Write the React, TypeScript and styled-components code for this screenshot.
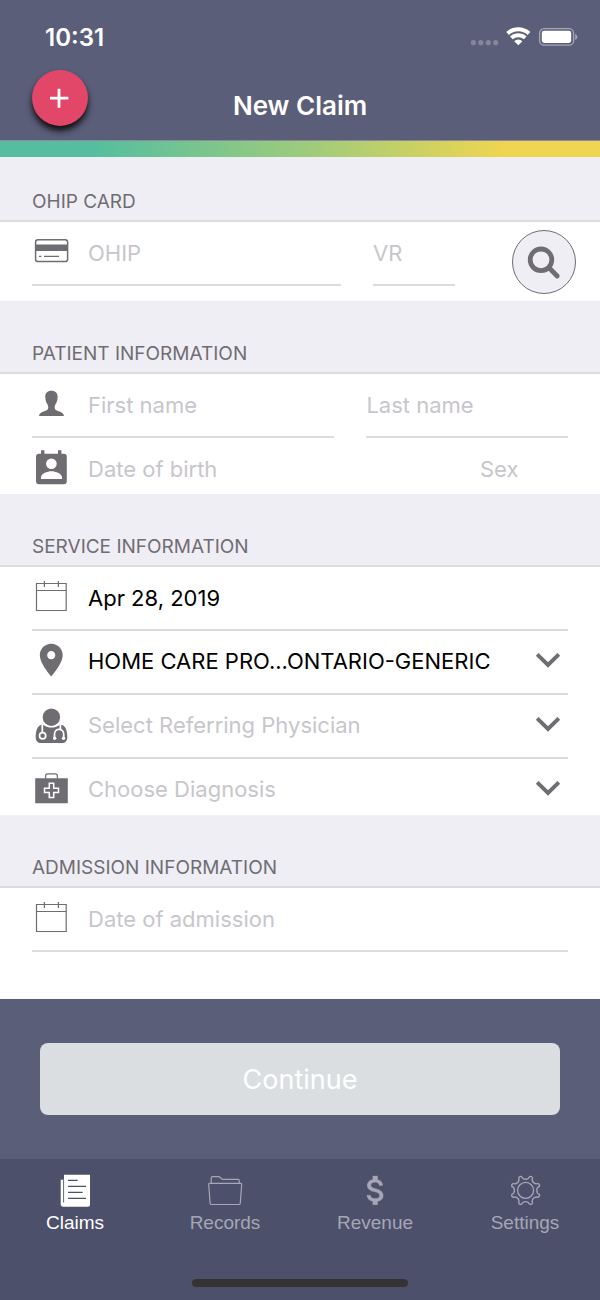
import React from "react";
import styled, { createGlobalStyle } from "styled-components";

const color = {
  chrome: "#5b5e79",
  tabBar: "#4d506b",
  panel: "#f0eef5",
  line: "#dcdce0",
  icon: "#6f6d72",
  hint: "#c7c6cc",
  accent: "#e24668",
  tabIdle: "#a5a6b6",
};

const GlobalStyle = createGlobalStyle`
  *, *::before, *::after { box-sizing: border-box; }
  body {
    margin: 0;
    background: ${color.tabBar};
    font-family: Inter, "Liberation Sans", sans-serif;
  }
  button, input, select { font: inherit; margin: 0; }
`;

const Page = styled.div`
  display: flex;
  flex-direction: column;
  min-height: 100vh;
`;

const Header = styled.header`
  background: ${color.chrome};
  color: #fff;
  border-bottom: 1px solid #8a8a9c;
`;

const StatusBar = styled.div`
  display: flex;
  align-items: center;
  justify-content: space-between;
  height: 70px;
  padding: 4px 22px 0 45px;
`;

const Clock = styled.time`
  font-size: 24px;
  font-weight: 600;
`;

const NavBar = styled.div`
  display: grid;
  grid-template-columns: 1fr auto 1fr;
  align-items: center;
  height: 70px;
  padding: 0 32px;
`;

const Title = styled.h1`
  margin: 0;
  padding-top: 2px;
  font-size: 26px;
  line-height: 32px;
  font-weight: 600;
`;

const AddButton = styled.button`
  display: flex;
  align-items: center;
  justify-content: center;
  align-self: start;
  width: 56px;
  height: 56px;
  padding: 0;
  border: 0;
  border-radius: 50%;
  background: ${color.accent};
  color: #fff;
  box-shadow: 0 5px 6px #111;
`;

const Rainbow = styled.div`
  height: 16px;
  background: linear-gradient(90deg, #56be9f 16%, #9bcb7d 50%, #efd550 84%);
`;

const Form = styled.main`
  flex: 1;
  background: #fff;
`;

const Section = styled.section`
  &:last-child { padding-bottom: 47px; }
`;

const SectionTitle = styled.h2<{ $compact?: boolean }>`
  display: flex;
  align-items: flex-end;
  height: ${(p) => (p.$compact ? 65 : 73)}px;
  margin: 0;
  padding: 0 32px 5px;
  background: ${color.panel};
  border-bottom: 2px solid ${color.line};
  color: ${color.icon};
  font-size: 19px;
  line-height: 26px;
  font-weight: 400;
`;

const CardBody = styled.div`
  display: flex;
  align-items: center;
  gap: 57px;
  padding-right: 24px;
`;

const CardFields = styled.div`
  flex: 1;
  display: grid;
  grid-template-columns: 1fr 82px;
  gap: 32px;
  padding: 0 0 15px 32px;
`;

const Row = styled.div<{ $columns?: string }>`
  display: grid;
  grid-template-columns: ${(p) => p.$columns ?? "1fr"};
  gap: 32px;
  padding: 0 32px;
`;

const Field = styled.label<{ $last?: boolean }>`
  display: flex;
  align-items: center;
  gap: 18px;
  min-width: 0;
  height: ${(p) => (p.$last ? 56 : 64)}px;
  padding-top: ${(p) => (p.$last ? 6 : 0)}px;
  border-bottom: ${(p) => (p.$last ? "0" : `2px solid ${color.line}`)};
`;

const TextInput = styled.input`
  flex: 1;
  width: 100%;
  min-width: 0;
  height: 40px;
  padding: 0;
  border: 0;
  outline: 0;
  background: transparent;
  color: #000;
  font-size: 22px;
  &::placeholder { color: ${color.hint}; opacity: 1; }
`;

const Picker = styled.select<{ $empty?: boolean }>`
  flex: 1;
  min-width: 0;
  height: 40px;
  padding: 0 0 2px;
  border: 0;
  outline: 0;
  appearance: none;
  background: transparent;
  color: ${(p) => (p.$empty ? color.hint : "#000")};
  font-size: 22px;
`;

const FieldIcon = styled.svg`
  flex: none;
  width: 38px;
  height: 40px;
  color: ${color.icon};
`;

const Chevron = styled.svg`
  flex: none;
  width: 26px;
  height: 20px;
  margin: 0 7px 4px 0;
  color: ${color.icon};
`;

const SearchButton = styled.button`
  display: flex;
  align-items: center;
  justify-content: center;
  width: 64px;
  height: 64px;
  padding: 0;
  border: 1px solid ${color.icon};
  border-radius: 50%;
  background: ${color.panel};
  color: ${color.icon};
`;

const Actions = styled.div`
  padding: 44px 40px;
  background: ${color.chrome};
`;

const ContinueButton = styled.button`
  display: block;
  width: 100%;
  height: 72px;
  border: 0;
  border-radius: 8px;
  background: #dadee1;
  color: #fff;
  font-size: 27px;
`;

const TabBar = styled.nav`
  display: flex;
  flex-direction: column;
  justify-content: space-between;
  align-items: center;
  height: 141px;
  padding: 14px 0 13px;
  background: ${color.tabBar};
`;

const Tabs = styled.div`
  display: grid;
  grid-template-columns: repeat(4, 1fr);
  width: 100%;
`;

const Tab = styled.a<{ $active?: boolean }>`
  display: flex;
  flex-direction: column;
  align-items: center;
  color: ${(p) => (p.$active ? "#fff" : color.tabIdle)};
  font-family: "Liberation Sans", Arial, sans-serif;
  font-size: 19px;
  line-height: 28px;
  text-decoration: none;
`;

const TabIcon = styled.svg`
  width: 40px;
  height: 36px;
`;

const HomeIndicator = styled.div`
  width: 36%;
  height: 8px;
  border-radius: 4px;
  background: #363334;
`;

const StatusIcons = () => (
  <svg width="108" height="20" viewBox="0 0 108 20" fill="none" aria-hidden="true">
    <g fill="#fff" fillOpacity=".25">
      <circle cx="3.4" cy="15.7" r="2.6" />
      <circle cx="10.8" cy="15.7" r="2.6" />
      <circle cx="18.3" cy="15.7" r="2.6" />
      <circle cx="25.7" cy="15.7" r="2.6" />
    </g>
    <g stroke="#fff" strokeWidth="4">
      <path d="M37.6 6.4A16 16 0 0 1 59 6.4" />
      <path d="M41.4 10.9A10 10 0 0 1 55.2 10.9" />
    </g>
    <path d="M48.3 18.3L44.2 14.3A5.8 5.8 0 0 1 52.4 14.3Z" fill="#fff" />
    <rect x="69.6" y="1.6" width="34" height="16.6" rx="4.5" stroke="#fff" strokeOpacity=".45" strokeWidth="1.3" />
    <rect x="71.8" y="3.8" width="29.4" height="12.2" rx="2.4" fill="#fff" />
    <path d="M105.2 7c2.8 1 2.8 5 0 6z" fill="#fff" fillOpacity=".45" />
  </svg>
);

const CardIcon = () => (
  <FieldIcon viewBox="0 0 38 40" fill="none" stroke="currentColor" aria-hidden="true">
    <rect x="3.6" y="6.8" width="32" height="21.8" rx="2.4" strokeWidth="1.5" />
    <path d="M3.6 11.6H35.6V18H3.6Z" fill="currentColor" stroke="none" />
    <path d="M7 23.4H9.4M12 23.4H27" strokeWidth="1.4" />
  </FieldIcon>
);

const PersonIcon = () => (
  <FieldIcon viewBox="0 0 38 40" fill="currentColor" aria-hidden="true">
    <path d="M19.4 5.7C15.4 5.7 13.1 8 13.3 12C13.4 15.5 14.2 17.8 15.8 20C16.5 22 16.4 23.8 15.2 24.9C12.5 26.4 7.4 26.6 7 31H32C31.6 26.6 26.4 26.4 23.7 24.9C22.5 23.8 22.4 22 23.1 20C24.7 17.8 25.5 15.5 25.6 12C25.8 8 23.4 5.7 19.4 5.7Z" />
  </FieldIcon>
);

const BirthIcon = () => (
  <FieldIcon viewBox="0 0 38 40" aria-hidden="true">
    <path
      fill="currentColor"
      d="M9 1.2H12.4V4.7H26V1.2H29.4V4.7H31.8A3 3 0 0 1 34.8 7.7V32.2A3 3 0 0 1 31.8 35.2H7A3 3 0 0 1 4 32.2V7.7A3 3 0 0 1 7 4.7H9Z"
    />
    <circle cx="19.4" cy="14.7" r="5.3" fill="#fff" />
    <path d="M9 30V28.3C9 24.6 15.5 22.3 19.4 22.3S30 24.6 30 28.3V30Z" fill="#fff" />
  </FieldIcon>
);

const CalendarIcon = () => (
  <FieldIcon viewBox="0 0 38 40" fill="none" stroke="currentColor" strokeWidth="1.2" aria-hidden="true">
    <path d="M4.5 5.5H34.2V32.5H4.500ZM4.5 12.5H34.2M12.4 3V9M26.4 3V9" />
  </FieldIcon>
);

const PinIcon = () => (
  <FieldIcon viewBox="0 0 38 40" fill="currentColor" aria-hidden="true">
    <path
      transform="translate(-0.3 -1.5) scale(1.63)"
      d="M12 2C8.13 2 5 5.13 5 9c0 5.25 7 13 7 13s7-7.75 7-13c0-3.87-3.13-7-7-7zm0 9.5c-1.38 0-2.5-1.12-2.5-2.5s1.12-2.5 2.5-2.5 2.5 1.12 2.5 2.5-1.12 2.5-2.5 2.5z"
    />
  </FieldIcon>
);

const DoctorIcon = () => (
  <FieldIcon viewBox="0 0 38 40" fill="none" aria-hidden="true">
    <path
      fill="currentColor"
      d="M10.5 18.5C5.5 19.2 3.7 24 3.7 31.5C3.7 35 5.8 37 9 37H30C33.2 37 35.3 35 35.3 31.5C35.3 24 33.5 19.2 28.5 18.5C23 22.6 16 22.6 10.5 18.5Z"
    />
    <circle cx="19.4" cy="11.2" r="8.7" fill="currentColor" />
    <g stroke="#fff" strokeWidth="1.7">
      <path d="M10.3 17.5V26.5" />
      <circle cx="10.6" cy="29.7" r="3.1" />
      <path d="M28.4 17.5V23.5M22.5 32V28.3C22.5 21.8 31.7 21.8 31.7 28.3V32" />
    </g>
    <circle cx="22.7" cy="32.3" r="1.7" fill="#fff" />
    <circle cx="31.5" cy="32.3" r="1.7" fill="#fff" />
  </FieldIcon>
);

const KitIcon = () => (
  <FieldIcon viewBox="0 0 38 40" fill="none" aria-hidden="true">
    <path d="M3.2 8.3H35.8V33.2H3.2Z" fill="currentColor" />
    <path d="M13.6 8.5V5.9Q13.6 3.8 15.7 3.8H23.3Q25.4 3.8 25.4 5.9V8.5" stroke="currentColor" strokeWidth="1.2" />
    <path
      d="M17.3 13.3H21.7V18.2H26.5V22.6H21.7V27.4H17.3V22.6H12.5V18.2H17.3Z"
      stroke="#fff"
      strokeWidth="1.5"
    />
  </FieldIcon>
);

const ChevronIcon = () => (
  <Chevron viewBox="0 0 26 20" fill="none" stroke="currentColor" strokeWidth="4" aria-hidden="true">
    <path d="M2.2 4.4L13 15L23.8 4.4" />
  </Chevron>
);

const ClaimsIcon = () => (
  <TabIcon viewBox="0 0 40 36" fill="none" aria-hidden="true">
    <path d="M9 1.7H35V31.7Q35 33.7 33 33.7H7.8Q5.7 33.7 5.7 31.6V6.7H9Z" fill="#fff" />
    <path d="M8.6 6.7V29.5" stroke={color.tabBar} strokeWidth=".9" />
    <path d="M13 7.4H22.7M13 13.4H31M13 19.4H27.7M13 25.4H31" stroke={color.tabBar} strokeWidth="1.2" />
  </TabIcon>
);

const RecordsIcon = () => (
  <TabIcon viewBox="0 0 40 36" fill="none" stroke="currentColor" strokeWidth="1.2" strokeLinejoin="round" aria-hidden="true">
    <path d="M6.2 10.3V5Q6.2 3.6 7.6 3.6H13.6Q14.6 3.6 15.3 4.5L16.3 5.7Q16.8 6.3 17.8 6.3H33Q34.2 6.3 34.2 7.5V10.3" />
    <path d="M4.6 10.4H35.8Q36.8 10.4 36.7 11.4L35.3 30.2Q35.2 31.5 34 31.5H6.4Q5.2 31.5 5.1 30.2L3.7 11.4Q3.6 10.4 4.6 10.4Z" />
  </TabIcon>
);

const RevenueIcon = () => (
  <TabIcon viewBox="0 0 40 36" fill="currentColor" stroke="currentColor" strokeWidth=".2" aria-hidden="true">
    <path
      transform="translate(1.8 -1.8) scale(1.6)"
      d="M11.8 10.9c-2.27-.59-3-1.2-3-2.15 0-1.09 1.01-1.85 2.7-1.85 1.78 0 2.44.85 2.5 2.1h2.21c-.07-1.72-1.12-3.3-3.21-3.81V3h-3v2.16c-1.94.42-3.5 1.68-3.5 3.61 0 2.31 1.91 3.46 4.7 4.13 2.5.6 3 1.48 3 2.41 0 .69-.49 1.79-2.7 1.79-2.06 0-2.87-.92-2.98-2.1h-2.2c.12 2.19 1.76 3.42 3.68 3.83V21h3v-2.15c1.95-.37 3.5-1.5 3.5-3.55 0-2.84-2.43-3.81-4.7-4.4z"
    />
  </TabIcon>
);

// Outline of an eight-toothed cog: narrow rounded tips joined by hollow arcs.
const cogPath = (cx: number, cy: number, r: number) => {
  const point = (deg: number) => {
    const a = (deg * Math.PI) / 180;
    return `${(cx + r * Math.cos(a)).toFixed(2)} ${(cy + r * Math.sin(a)).toFixed(2)}`;
  };
  let d = `M${point(16)}`;
  for (let i = 0; i < 8; i += 1) {
    const a = 22.5 + i * 45;
    d += `A2.4 2.4 0 0 1 ${point(a + 6.5)}A4.3 4.3 0 0 0 ${point(a + 38.5)}`;
  }
  return `${d}Z`;
};

const SettingsIcon = () => (
  <TabIcon viewBox="0 0 40 36" fill="none" stroke="currentColor" strokeWidth="1.3" strokeLinejoin="round" aria-hidden="true">
    <path d={cogPath(20.6, 17.4, 14.3)} />
    <circle cx="20.6" cy="17.4" r="8" />
  </TabIcon>
);

const tabs = [
  { label: "Claims", Icon: ClaimsIcon },
  { label: "Records", Icon: RecordsIcon },
  { label: "Revenue", Icon: RevenueIcon },
  { label: "Settings", Icon: SettingsIcon },
];

export default function App() {
  return (
    <Page>
      <GlobalStyle />
      <Header>
        <StatusBar>
          <Clock>10:31</Clock>
          <StatusIcons />
        </StatusBar>
        <NavBar>
          <AddButton type="button" aria-label="Add claim">
            <svg width="20" height="20" viewBox="0 0 20 20" stroke="currentColor" strokeWidth="2.8" aria-hidden="true">
              <path d="M9 .7V19.7M0 10.2H18.400" />
            </svg>
          </AddButton>
          <Title>New Claim</Title>
        </NavBar>
      </Header>
      <Rainbow />

      <Form>
        <Section>
          <SectionTitle $compact>OHIP CARD</SectionTitle>
          <CardBody>
            <CardFields>
              <Field>
                <CardIcon />
                <TextInput aria-label="OHIP" placeholder="OHIP" />
              </Field>
              <Field>
                <TextInput aria-label="VR" placeholder="VR" />
              </Field>
            </CardFields>
            <SearchButton type="button" aria-label="Search">
              <svg width="40" height="40" viewBox="0 0 40 40" fill="none" stroke="currentColor" strokeWidth="4.8" strokeLinecap="round" aria-hidden="true">
                <circle cx="17" cy="17.8" r="10.8" />
                <path d="M25.5 26.3L33.2 34" />
              </svg>
            </SearchButton>
          </CardBody>
        </Section>

        <Section>
          <SectionTitle>PATIENT INFORMATION</SectionTitle>
          <Row $columns="3fr 2fr">
            <Field>
              <PersonIcon />
              <TextInput aria-label="First name" placeholder="First name" />
            </Field>
            <Field>
              <TextInput aria-label="Last name" placeholder="Last name" />
            </Field>
          </Row>
          <Row $columns="1fr 88px">
            <Field $last>
              <BirthIcon />
              <TextInput aria-label="Date of birth" placeholder="Date of birth" />
            </Field>
            <Field $last>
              <TextInput aria-label="Sex" placeholder="Sex" />
            </Field>
          </Row>
        </Section>

        <Section>
          <SectionTitle>SERVICE INFORMATION</SectionTitle>
          <Row>
            <Field>
              <CalendarIcon />
              <TextInput aria-label="Service date" defaultValue="Apr 28, 2019" />
            </Field>
          </Row>
          <Row>
            <Field>
              <PinIcon />
              <Picker aria-label="Location">
                <option>HOME CARE PRO...ONTARIO-GENERIC</option>
              </Picker>
              <ChevronIcon />
            </Field>
          </Row>
          <Row>
            <Field>
              <DoctorIcon />
              <Picker $empty aria-label="Referring physician">
                <option>Select Referring Physician</option>
              </Picker>
              <ChevronIcon />
            </Field>
          </Row>
          <Row>
            <Field $last>
              <KitIcon />
              <Picker $empty aria-label="Diagnosis">
                <option>Choose Diagnosis</option>
              </Picker>
              <ChevronIcon />
            </Field>
          </Row>
        </Section>

        <Section>
          <SectionTitle>ADMISSION INFORMATION</SectionTitle>
          <Row>
            <Field>
              <CalendarIcon />
              <TextInput aria-label="Date of admission" placeholder="Date of admission" />
            </Field>
          </Row>
        </Section>
      </Form>

      <Actions>
        <ContinueButton type="button">Continue</ContinueButton>
      </Actions>

      <TabBar>
        <Tabs>
          {tabs.map(({ label, Icon }, i) => (
            <Tab key={label} href={`#${label.toLowerCase()}`} $active={i === 0} aria-current={i === 0 ? "page" : undefined}>
              <Icon />
              {label}
            </Tab>
          ))}
        </Tabs>
        <HomeIndicator />
      </TabBar>
    </Page>
  );
}
